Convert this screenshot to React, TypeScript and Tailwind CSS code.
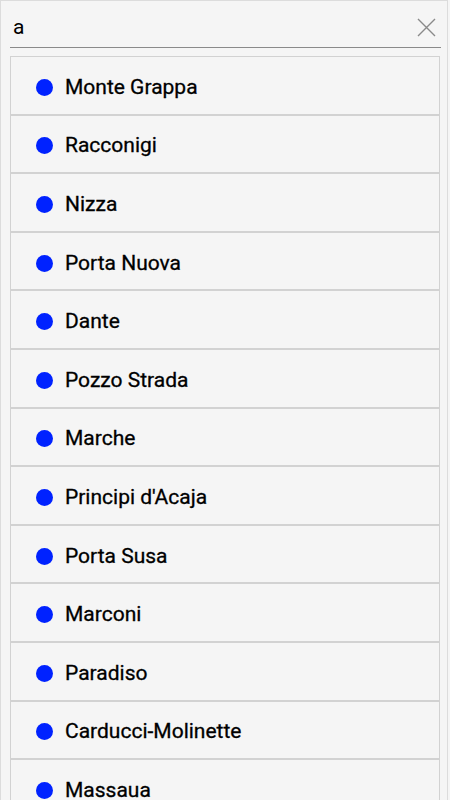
import React from 'react';

const STOPS = [
  'Monte Grappa',
  'Racconigi',
  'Nizza',
  'Porta Nuova',
  'Dante',
  'Pozzo Strada',
  'Marche',
  "Principi d'Acaja",
  'Porta Susa',
  'Marconi',
  'Paradiso',
  'Carducci-Molinette',
  'Massaua',
];

const App: React.FC = () => {
  return (
    <div className="h-[800px] w-[450px] bg-[#f5f5f5]">
      <div
        className="h-[800px] w-[448px] overflow-hidden border-l border-r border-t border-[#dcdcdc] bg-[#f5f5f5] text-black"
        style={{ fontFamily: 'Roboto, "Noto Sans", sans-serif' }}
      >
        <div className="mr-[6px] flex h-[47px] items-end pl-[9px]">
          <div className="flex h-[38px] w-full items-center border-b border-[#8a8a8a] pl-[3px] pr-[5px]">
            <span className="flex-1 pb-[3px] text-[21px] leading-none">a</span>
            <svg width="19" height="19" viewBox="0 0 19 19" className="mb-[2px]">
              <path d="M1 1 L18 18 M18 1 L1 18" stroke="#8a8a8a" strokeWidth="1.4" fill="none" />
            </svg>
          </div>
        </div>

        <ul className="mt-[8px] mr-[7px] pl-[9px]">
          {STOPS.map((name) => (
            <li
              key={name}
              className="box-border flex h-[58.6px] items-center border border-[#d2d2d2] pl-[25px] pt-[4px]"
            >
              <span className="mr-[12px] h-[17px] w-[17px] rounded-full bg-[#0022ff]" />
              <span className="text-[21px] leading-none [-webkit-text-stroke:0.3px_black]">{name}</span>
            </li>
          ))}
        </ul>
      </div>
    </div>
  );
};

export default App;
